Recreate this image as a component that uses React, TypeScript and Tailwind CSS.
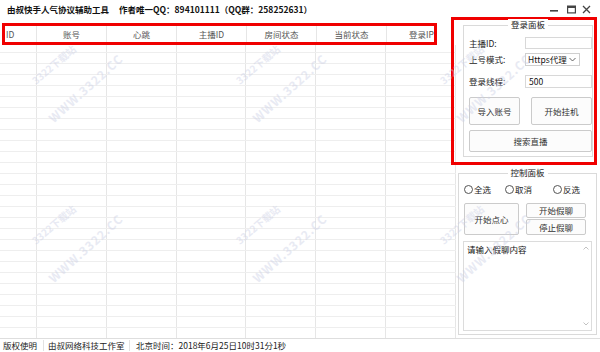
import React from "react";

const cols = ["账号", "心跳", "主播ID", "房间状态", "当前状态", "登录IP"];
const rowCount = 25;

// watermark anchor points (start of the rotated text)
const marks = [
  { x: 33, y: 76 },
  { x: 237, y: 76 },
  { x: 441, y: 76 },
  { x: 33, y: 236 },
  { x: 237, y: 236 },
  { x: 441, y: 236 },
];

function Btn({ children, className = "" }: { children: React.ReactNode; className?: string }) {
  return (
    <div
      className={`flex items-center justify-center border border-[#cbcbcb] rounded-[2px] bg-[#fcfcfc] text-[#333] ${className}`}
    >
      {children}
    </div>
  );
}

function Radio({ label, className = "" }: { label: string; className?: string }) {
  return (
    <div className={`flex items-center ${className}`}>
      <span className="w-[9px] h-[9px] rounded-full border border-[#555] bg-white" />
      <span className="ml-[1px]">{label}</span>
    </div>
  );
}

function Row({ h, top = true }: { h: string; top?: boolean }) {
  return (
    <div className={`flex ${h} ${top ? "border-t border-[#eeeeee]" : ""}`}>
      <div className="w-[37px] border-r border-[#e6e6e6]" />
      {cols.map((c) => (
        <div key={c} className="w-[70px] border-r border-[#e6e6e6]" />
      ))}
    </div>
  );
}

export default function App() {
  return (
    <div className="relative w-[600px] h-[352px] overflow-hidden bg-white text-[8.5px] leading-[11px] text-[#222] font-['Noto_Sans_CJK_SC','Noto_Sans',sans-serif]">
      {/* title bar */}
      <div className="h-[17px] flex items-start pt-[4px] pl-[7px] font-bold text-[#111]">
        <span>由叔快手人气协议辅助工具</span>
        <span className="ml-[10px]">作者唯一QQ：894101111（QQ群：258252631）</span>
        <div className="ml-auto flex items-center mr-[9px] mt-[1px] text-[#333]">
          <svg width="9" height="9" viewBox="0 0 9 9">
            <rect x="0" y="5" width="8" height="1.6" fill="#444" />
          </svg>
          <svg width="9" height="9" viewBox="0 0 9 9" className="ml-[8px]">
            <rect x="0.6" y="1.1" width="7.8" height="6.8" fill="none" stroke="#444" strokeWidth="1.2" />
            <rect x="0.6" y="1" width="7.8" height="2" fill="#444" />
          </svg>
          <svg width="9" height="9" viewBox="0 0 9 9" className="ml-[6px]">
            <path d="M1 1 L8 8 M8 1 L1 8" stroke="#444" strokeWidth="1.3" />
          </svg>
        </div>
      </div>

      <div className="flex h-[321px]">
        {/* list view */}
        <div className="w-[456px] flex flex-col pt-[6px]">
          <div className="h-[22px] pl-[2px] flex">
            <div className="w-[435px] h-[22px] border-[3px] border-[#f00000] flex overflow-hidden text-[#555]">
              <div className="w-[32px] shrink-0 pl-[1px] flex items-center border-r border-[#e6e6e6]">ID</div>
              {cols.map((c) => (
                <div
                  key={c}
                  className="w-[70px] shrink-0 flex items-center justify-center border-r border-[#e6e6e6]"
                >
                  {c}
                </div>
              ))}
            </div>
          </div>
          <Row h="h-[7px]" top={false} />
          {Array.from({ length: rowCount }).map((_, i) => (
            <Row key={i} h="h-[11px]" />
          ))}
          <div className="flex flex-1 border-t border-[#eeeeee]">
            <div className="w-[37px] border-r border-[#e6e6e6]" />
            {cols.map((c) => (
              <div key={c} className="w-[70px] border-r border-[#e6e6e6]" />
            ))}
          </div>
        </div>

        {/* right side */}
        <div className="w-[144px] flex flex-col">
          <div className="ml-[-5px] w-[146px] h-[148px] border-[3px] border-[#f00000] pl-[9px] pr-[1px] py-[5px]">
            <div className="relative h-full border border-[#dadada] pl-[5px] pt-[11px]">
              <span className="absolute top-[-7px] left-1/2 -translate-x-1/2 bg-white px-[3px]">登录面板</span>
              <div className="flex items-center h-[12px]">
                <span className="w-[56px]">主播ID:</span>
                <div className="w-[67px] h-[12px] border border-[#d8d8d8]" />
              </div>
              <div className="flex items-center h-[12px] mt-[4px]">
                <span className="w-[56px]">上号模式:</span>
                <div className="w-[55px] h-[13px] border border-[#cfcfcf] flex items-center pl-[2px] text-[#111]">
                  <span>Https代理</span>
                  <svg width="7" height="5" viewBox="0 0 7 5" className="ml-auto mr-[3px]">
                    <path d="M0.5 1 L3.5 4 L6.5 1" fill="none" stroke="#555" strokeWidth="0.9" />
                  </svg>
                </div>
              </div>
              <div className="flex items-center h-[13px] mt-[10px]">
                <span className="w-[56px]">登录线程:</span>
                <div className="w-[67px] h-[13px] border border-[#d8d8d8] flex items-center pl-[3px] text-[#111]">
                  500
                </div>
              </div>
              <div className="flex mt-[9px]">
                <Btn className="w-[51px] h-[28px]">导入账号</Btn>
                <Btn className="w-[61px] h-[28px] ml-[11px]">开始挂机</Btn>
              </div>
              <Btn className="w-[123px] h-[22px] mt-[5px]">搜索直播</Btn>
            </div>
          </div>

          <div className="relative ml-[2px] mt-[8px] w-[139px] h-[162px] border border-[#dadada] pl-[5px] pt-[10px]">
            <span className="absolute top-[-7px] left-1/2 -translate-x-1/2 bg-white px-[3px]">控制面板</span>
            <div className="flex h-[10px] items-center">
              <Radio label="全选" className="w-[41px]" />
              <Radio label="取消" className="w-[48px]" />
              <Radio label="反选" />
            </div>
            <div className="flex mt-[9px]">
              <Btn className="w-[55px] h-[32px]">开始点心</Btn>
              <div className="ml-[7px] w-[60px] flex flex-col">
                <Btn className="h-[15px]">开始假聊</Btn>
                <Btn className="h-[16px] mt-[1px]">停止假聊</Btn>
              </div>
            </div>
            <div className="ml-[-1px] mt-[6px] w-[129px] h-[90px] border border-[#dcdcdc] flex">
              <div className="flex-1 pl-[3px] pt-[2px] text-[#111]">请输入假聊内容</div>
              <div className="w-[10px] flex flex-col items-center justify-between py-[4px]">
                <svg width="6" height="4" viewBox="0 0 6 4">
                  <path d="M0.5 3.5 L3 1 L5.5 3.5" fill="none" stroke="#bbb" strokeWidth="0.9" />
                </svg>
                <svg width="6" height="4" viewBox="0 0 6 4">
                  <path d="M0.5 0.5 L3 3 L5.5 0.5" fill="none" stroke="#bbb" strokeWidth="0.9" />
                </svg>
              </div>
            </div>
          </div>
        </div>
      </div>

      {/* status bar */}
      <div className="h-[14px] border-t border-[#dedede] flex items-center text-[#222]">
        <span className="pl-[3px] w-[43px]">版权使明</span>
        <span className="h-[11px] border-l border-[#e2e2e2]" />
        <span className="pl-[4px] w-[85px]">由叔网络科技工作室</span>
        <span className="h-[11px] border-l border-[#e2e2e2]" />
        <span className="pl-[6px]">北京时间：2018年6月25日10时31分1秒</span>
      </div>

      {/* watermark */}
      <div className="absolute inset-0 pointer-events-none">
        {marks.map((m, i) => (
          <React.Fragment key={i}>
            <span
              className="absolute origin-left -rotate-[40deg] text-[10px] font-bold text-[#cdd1e6] opacity-45 whitespace-nowrap"
              style={{ left: m.x, top: m.y }}
            >
              3322下载站
            </span>
            <span
              className="absolute origin-left -rotate-[42deg] text-[12px] font-bold tracking-[1px] text-[#cdd1e6] opacity-45 whitespace-nowrap"
              style={{ left: m.x + 17, top: m.y + 38 }}
            >
              WWW.3322.CC
            </span>
          </React.Fragment>
        ))}
      </div>
    </div>
  );
}
